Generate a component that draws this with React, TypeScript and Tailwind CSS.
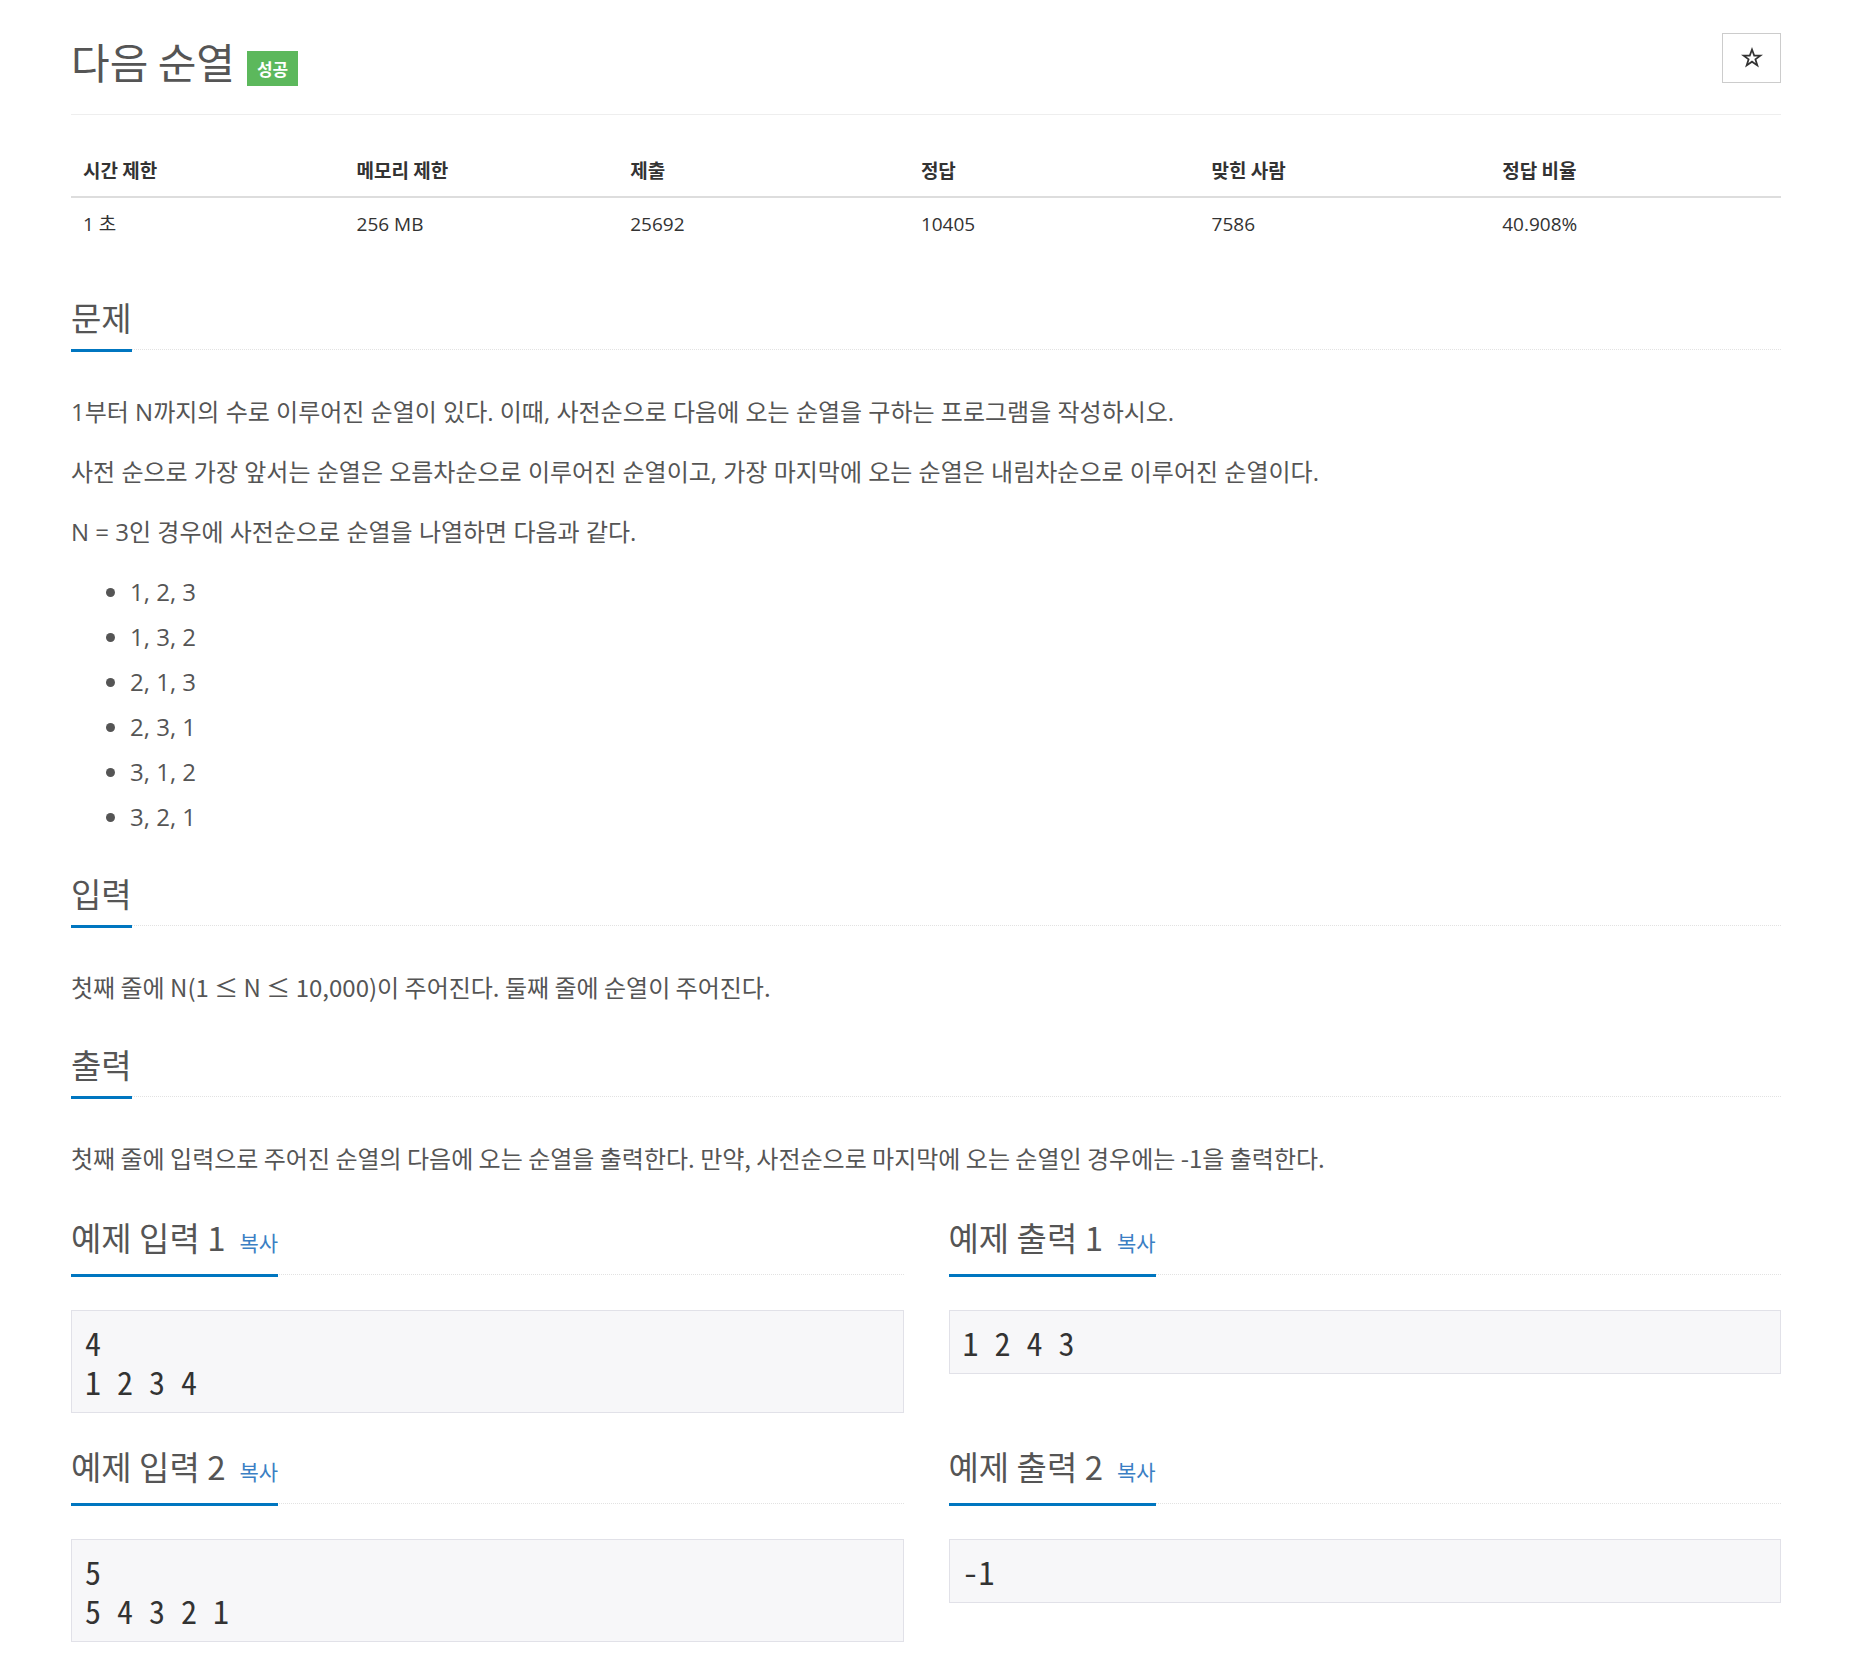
import type { ReactNode } from 'react';

const openSans = "font-['Open_Sans','Noto_Sans_CJK_KR',sans-serif]";
const noto = "font-['Noto_Sans_CJK_KR','Open_Sans',sans-serif]";
const mono = "font-['Noto_Sans_Mono_CJK_KR','Liberation_Mono',monospace]";

const stats = [
  { label: '시간 제한', value: '1 초', width: 'w-[16%]' },
  { label: '메모리 제한', value: '256 MB', width: 'w-[16%]' },
  { label: '제출', value: '25692', width: 'w-[17%]' },
  { label: '정답', value: '10405', width: 'w-[17%]' },
  { label: '맞힌 사람', value: '7586', width: 'w-[17%]' },
  { label: '정답 비율', value: '40.908%', width: 'w-[17%]' },
];

const permutations = ['1, 2, 3', '1, 3, 2', '2, 1, 3', '2, 3, 1', '3, 1, 2', '3, 2, 1'];

const samples = [
  { title: '예제 입력 1', lines: ['4', '1 2 3 4'] },
  { title: '예제 출력 1', lines: ['1 2 4 3'] },
  { title: '예제 입력 2', lines: ['5', '5 4 3 2 1'] },
  { title: '예제 출력 2', lines: ['-1'] },
];

function StarIcon() {
  return (
    <svg viewBox="0 0 24 24" aria-hidden="true" className="h-[22px] w-[22px]">
      <path
        fill="none"
        stroke="#333"
        strokeWidth="1.9"
        strokeLinejoin="miter"
        d="M12 2.8 14.4 9.4H21.2L15.7 13.4 17.8 20.1 12 16 6.2 20.1 8.3 13.4 2.8 9.4H9.6Z"
      />
    </svg>
  );
}

function Headline({ children, copy }: { children: ReactNode; copy?: boolean }) {
  return (
    <div className="flex border-b border-dotted border-[#e2e2e2]">
      <h2
        className={`${noto} -mb-[3px] border-b-[3px] border-[#0076c0] pb-[10px] text-[33px] leading-[44px] font-normal text-[#555]`}
      >
        {children}
        {copy ? (
          <span className="ml-[14px] text-[21px] text-[#3b7fc4]">복사</span>
        ) : null}
      </h2>
    </div>
  );
}

export default function App() {
  return (
    <div className="min-h-screen bg-white pb-[17px] pl-[71px] pr-[70px] text-[#555]">
      <div className="flex items-start justify-between pt-[33px]">
        <div className="flex items-center pt-[2px]">
          <h1 className={`${noto} text-[42px] leading-[50px] font-normal text-[#555]`}>다음 순열</h1>
          <span
            className={`${noto} ml-[12px] mt-[16px] flex h-[35px] items-center bg-[#5cb85c] px-[10px] text-[17px] font-bold text-white`}
          >
            성공
          </span>
        </div>
        <button
          type="button"
          aria-label="즐겨찾기"
          className="flex h-[50px] w-[59px] items-center justify-center border border-[#ccc] bg-white"
        >
          <StarIcon />
        </button>
      </div>

      <hr className="mt-[28px] border-t border-[#eee]" />

      <table className="mt-[28px] w-full table-fixed border-collapse text-left">
        <thead>
          <tr>
            {stats.map((s) => (
              <th
                key={s.label}
                className={`${noto} ${s.width} border-b-2 border-[#ddd] px-[12px] pb-[11px] pt-[12px] text-[19px] leading-[30px] font-bold text-[#333]`}
              >
                {s.label}
              </th>
            ))}
          </tr>
        </thead>
        <tbody>
          <tr>
            {stats.map((s) => (
              <td
                key={s.label}
                className={`${openSans} px-[12px] pb-[11px] pt-[11px] text-[19px] leading-[30px] text-[#333]`}
              >
                {s.value}
              </td>
            ))}
          </tr>
        </tbody>
      </table>

      <section className="mt-[45px]">
        <Headline>문제</Headline>
        <div className={`${openSans} mt-[44px] space-y-[24px] text-[24px] leading-[36px]`}>
          <p>1부터 N까지의 수로 이루어진 순열이 있다. 이때, 사전순으로 다음에 오는 순열을 구하는 프로그램을 작성하시오.</p>
          <p>사전 순으로 가장 앞서는 순열은 오름차순으로 이루어진 순열이고, 가장 마지막에 오는 순열은 내림차순으로 이루어진 순열이다.</p>
          <p>N = 3인 경우에 사전순으로 순열을 나열하면 다음과 같다.</p>
          <ul className="list-disc space-y-[9px] pl-[59px] marker:text-[#555]">
            {permutations.map((p) => (
              <li key={p}>{p}</li>
            ))}
          </ul>
        </div>
      </section>

      <section className="mt-[36px]">
        <Headline>입력</Headline>
        <p className={`${noto} mt-[43px] text-[24px] leading-[36px]`}>
          첫째 줄에 N(1 ≤ N ≤ 10,000)이 주어진다. 둘째 줄에 순열이 주어진다.
        </p>
      </section>

      <section className="mt-[37px]">
        <Headline>출력</Headline>
        <p className={`${noto} mt-[43px] text-[24px] leading-[36px]`}>
          첫째 줄에 입력으로 주어진 순열의 다음에 오는 순열을 출력한다. 만약, 사전순으로 마지막에 오는 순열인 경우에는 -1을 출력한다.
        </p>
      </section>

      <div className="mt-[39px] grid grid-cols-2 items-start gap-x-[45px] gap-y-[31px]">
        {samples.map((s) => (
          <section key={s.title}>
            <Headline copy>{s.title}</Headline>
            <pre
              className={`${mono} mt-[35px] border border-[#e1e1e8] bg-[#f7f7f9] px-[13px] pb-[11px] pt-[12px] text-[32px] leading-[39px] text-[#333]`}
            >
              {s.lines.join('\n')}
            </pre>
          </section>
        ))}
      </div>
    </div>
  );
}
